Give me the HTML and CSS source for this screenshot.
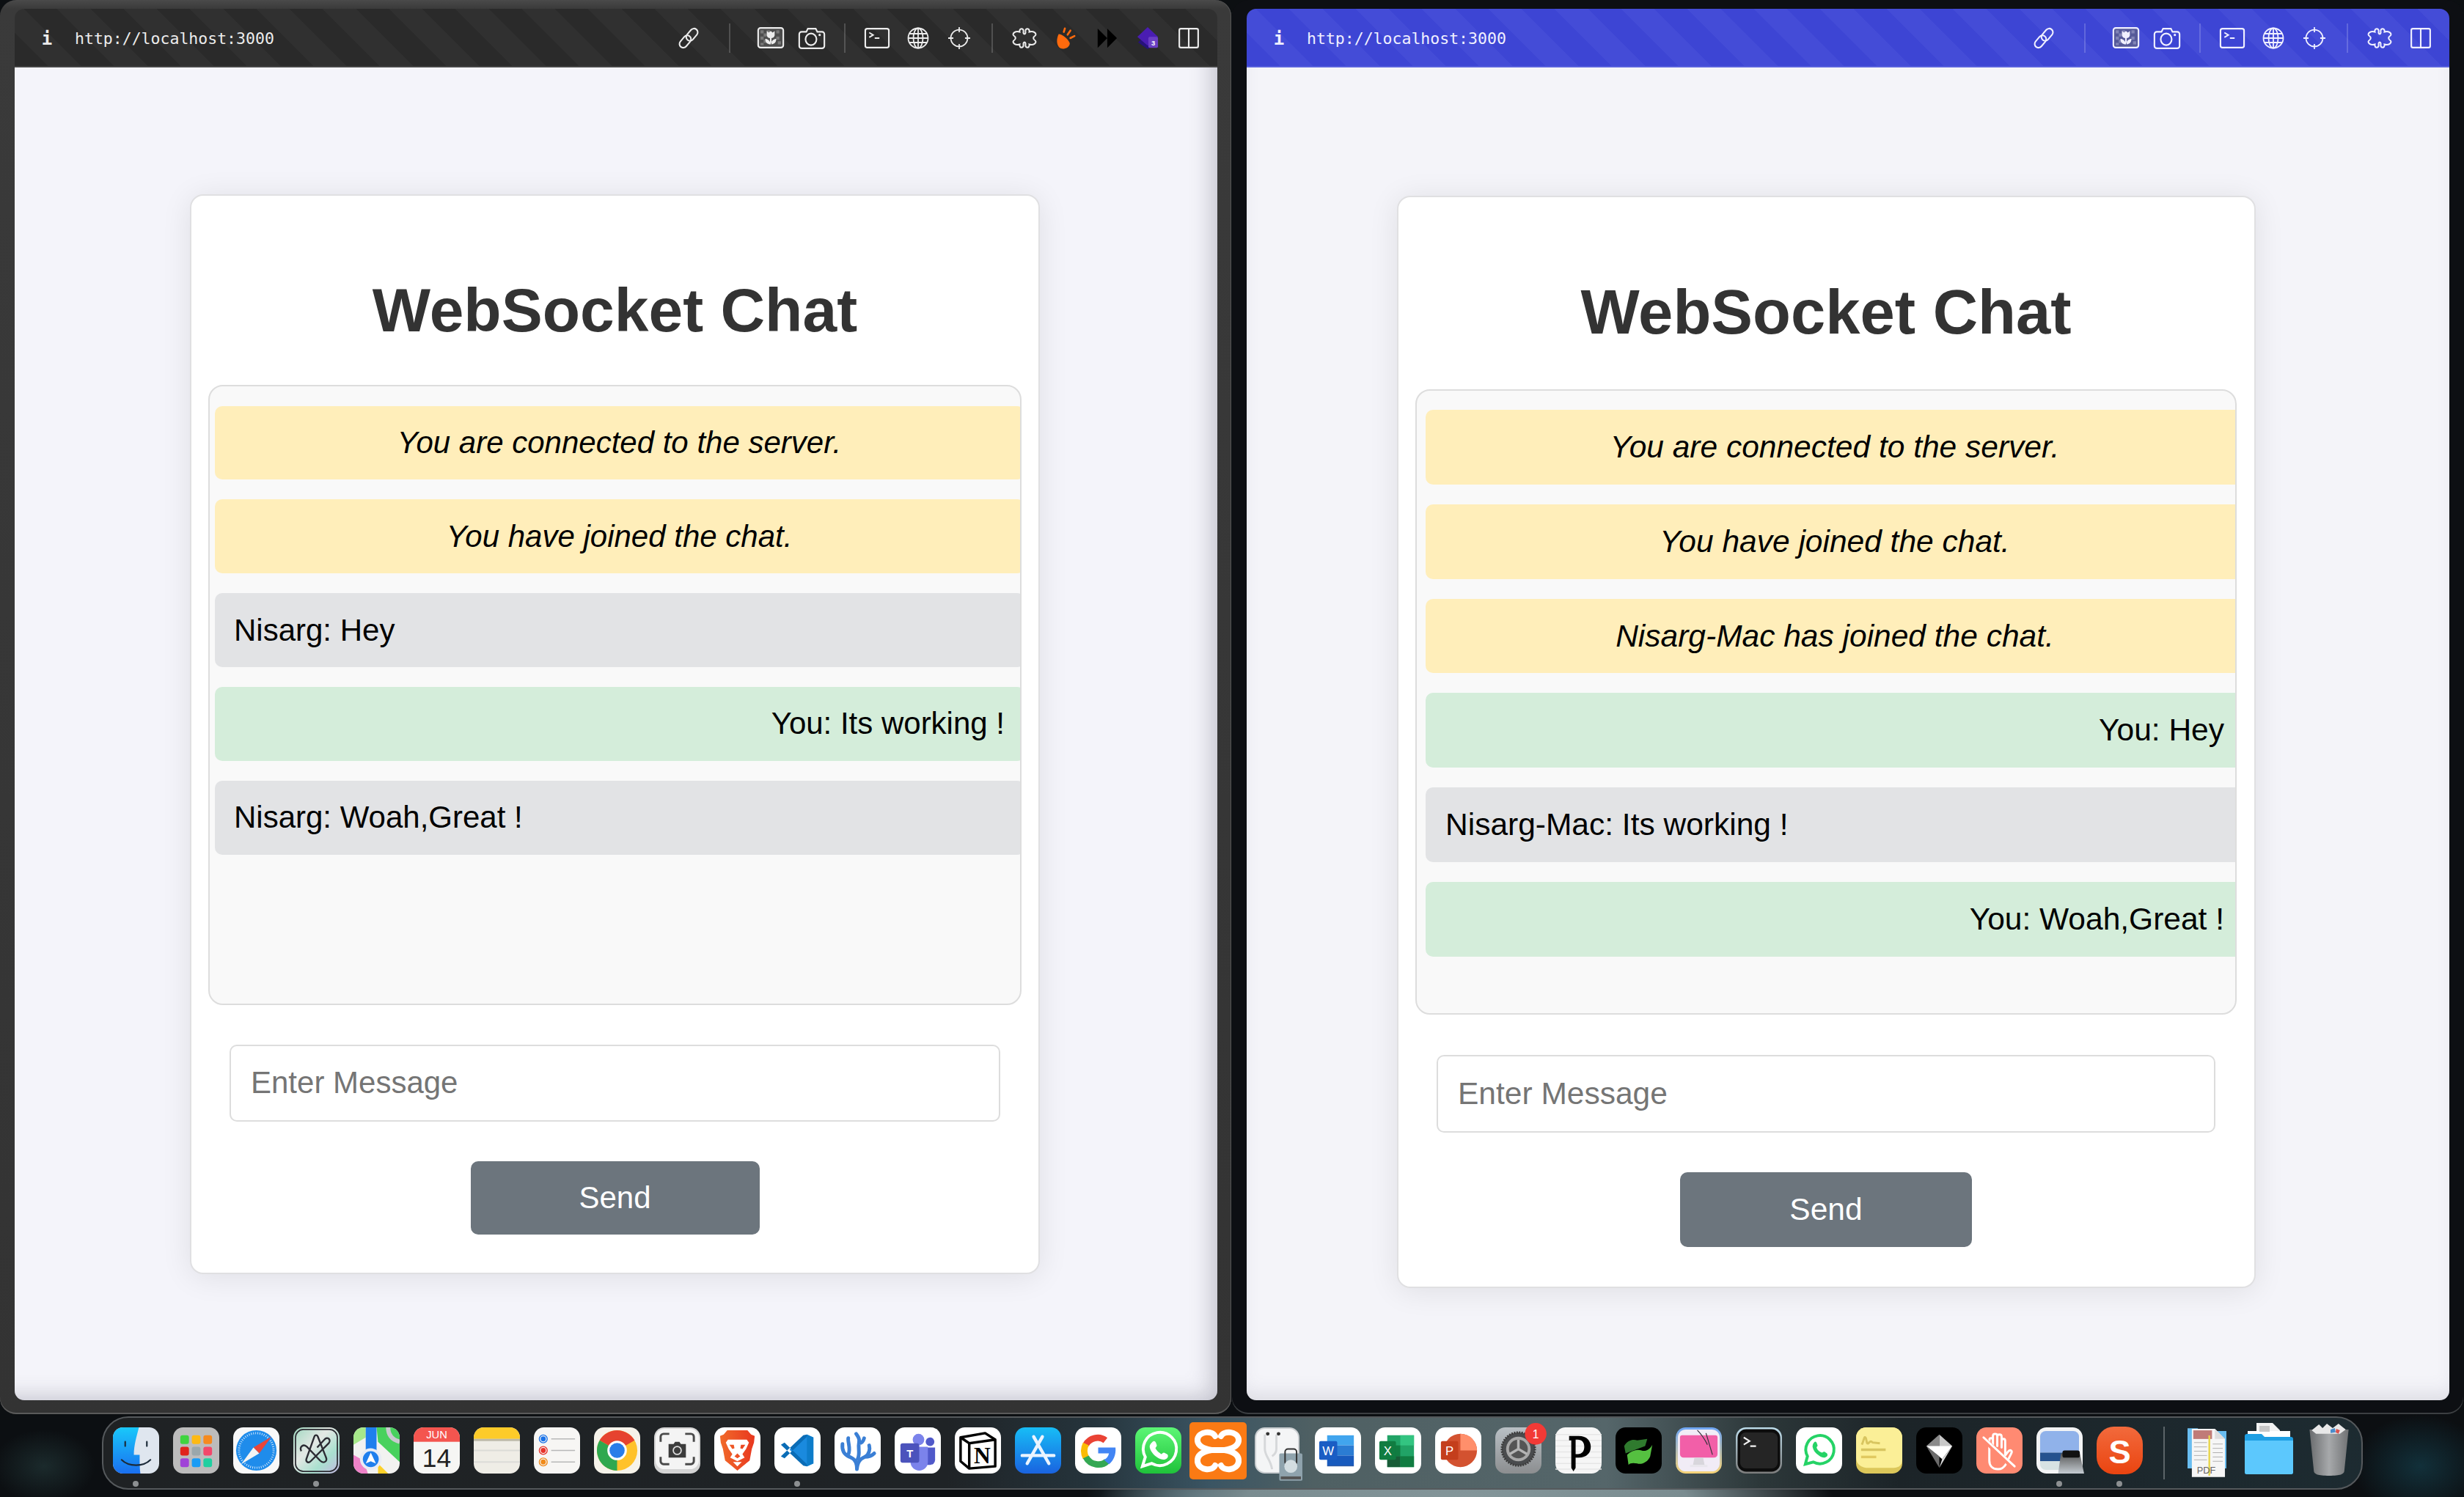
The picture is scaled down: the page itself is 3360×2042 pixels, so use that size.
FILE: index.html
```html
<!DOCTYPE html>
<html lang="en">
<head>
<meta charset="utf-8">
<title>WebSocket Chat</title>
<link rel="stylesheet" href="styles.css">
</head>
<body>
<svg class="sprite" aria-hidden="true">
  <symbol id="i-link" viewBox="0 0 32 32"><g fill="none" stroke="currentColor" stroke-width="2.200" transform="rotate(-50 16 16)"><rect x="-1" y="10" width="20" height="11" rx="5.500"/><rect x="13" y="11" width="20" height="11" rx="5.500"/></g></symbol>
  <symbol id="i-tulip" viewBox="0 0 34 28"><rect x="1" y="1" width="32" height="25" rx="3" fill="#666" fill-opacity=".55" stroke="currentColor" stroke-width="2"/><g fill="currentColor" fill-opacity=".28"><rect x="4" y="4" width="4" height="4"/><rect x="12" y="4" width="4" height="4"/><rect x="24" y="4" width="4" height="4"/><rect x="8" y="8" width="4" height="4"/><rect x="24" y="12" width="4" height="4"/><rect x="4" y="12" width="4" height="4"/><rect x="8" y="16" width="4" height="4"/><rect x="26" y="18" width="4" height="4"/><rect x="4" y="20" width="4" height="3"/></g><path fill="currentColor" d="M12 5l2.500 2L17 5l2.500 2L22 5v5c0 2.500-2.200 4-5 4s-5-1.500-5-4zM16 14h2v8h-2zM10 15c3 0 6 2 7 7-4 0-7-2-7-7zM24 15c-3 0-6 2-7 7 4 0 7-2 7-7z"/></symbol>
  <symbol id="i-camera" viewBox="0 0 34 28"><path fill="none" stroke="currentColor" stroke-width="2" d="M4 6h6l2-4h10l2 4h6a3 3 0 0 1 3 3v15a3 3 0 0 1-3 3H4a3 3 0 0 1-3-3V9a3 3 0 0 1 3-3z"/><ellipse cx="16" cy="15.500" rx="7" ry="7.500" fill="none" stroke="currentColor" stroke-width="2"/><circle cx="27" cy="10" r="1.500" fill="currentColor"/></symbol>
  <symbol id="i-term" viewBox="0 0 34 28"><rect x="2" y="2" width="30" height="24" rx="2.500" fill="none" stroke="currentColor" stroke-width="2"/><path fill="none" stroke="currentColor" stroke-width="1.800" d="M7 7l5 3-5 3M14 14h6"/></symbol>
  <symbol id="i-globe" viewBox="0 0 30 30"><g fill="none" stroke="currentColor" stroke-width="1.800"><circle cx="15" cy="15" r="13.500"/><ellipse cx="15" cy="15" rx="6.500" ry="13.500"/><path d="M15 1.500v27M3 9h24M1.500 15h27M3 21h24"/></g></symbol>
  <symbol id="i-target" viewBox="0 0 34 34"><g fill="none" stroke="currentColor" stroke-width="2"><circle cx="17" cy="17" r="13"/><path d="M17 0v8M17 26v8M0 17h8M26 17h8"/></g></symbol>
  <symbol id="i-puzzle" viewBox="0 0 40 32"><path fill="none" stroke="currentColor" stroke-width="2.200" d="M13 7C12 1 19 1 18.500 6Q18 10 20 10T21.500 6C21 1 28 1 27 7 33 5 38 9 36 12Q33 14 33 16T36 20C38 23 33 27 27 25 28 31 21 31 21.500 26Q22 22 20 22T18.500 26C19 31 12 31 13 25 7 27 2 23 4 20Q7 18 7 16T4 12C2 9 7 5 13 7Z"/></symbol>
  <symbol id="i-side" viewBox="0 0 28 28"><path fill="none" stroke="currentColor" stroke-width="2" d="M4 2h20a2 2 0 0 1 2 2v20a2 2 0 0 1-2 2H4a2 2 0 0 1-2-2V4a2 2 0 0 1 2-2zM14 2v24"/></symbol>
</svg>

<main class="desktop">
  <section class="window window-dark">
    <div class="browser">
      <header class="toolbar toolbar-dark">
        <span class="site-info">i</span>
        <span class="url">http://localhost:3000</span>
        <span class="tool"><svg class="ti"><use href="#i-link"/></svg></span>
        <span class="tool-sep tool-sep-wide"></span>
        <span class="tool"><svg class="ti ti-w"><use href="#i-tulip"/></svg></span>
        <span class="tool"><svg class="ti ti-w"><use href="#i-camera"/></svg></span>
        <span class="tool-sep"></span>
        <span class="tool"><svg class="ti ti-w"><use href="#i-term"/></svg></span>
        <span class="tool"><svg class="ti"><use href="#i-globe"/></svg></span>
        <span class="tool"><svg class="ti ti-w"><use href="#i-target"/></svg></span>
        <span class="tool-sep"></span>
        <span class="tool"><svg class="ti ti-w"><use href="#i-puzzle"/></svg></span>
        <span class="tool"><svg class="ti" viewBox="0 0 32 32"><path fill="#ff6a0d" d="M6 10C11 10 19 16 22 23 23 29 14 33 9 31 3 28 2 18 6 10Z"/><path fill="none" stroke="#ff6a0d" stroke-width="2.800" stroke-linecap="round" d="M15 2l-1.500 5M23 5l-4 6M29 13l-6 3"/></svg></span>
        <span class="tool"><svg class="ti" viewBox="0 0 32 32"><path fill="#000" d="M3 2l14 14L3 30zM17 2l14 14-14 14z"/></svg></span>
        <span class="tool"><svg class="ti" viewBox="0 0 32 32"><path fill="#26127a" d="M16 9L30 22 16 32 2 22z"/><path fill="#4a1db2" d="M16 0l15 14-15 13L1 14z"/><rect x="17" y="14" width="14" height="16" rx="2" fill="#6b3fc4"/><text class="badge-3" x="24" y="27">3</text></svg></span>
        <span class="tool"><svg class="ti"><use href="#i-side"/></svg></span>
      </header>
      <div class="page page-a">
        <article class="card card-a">
          <h1 class="title">WebSocket Chat</h1>
          <div class="chat">
            <p class="msg msg-sys">You are connected to the server.</p>
            <p class="msg msg-sys">You have joined the chat.</p>
            <p class="msg msg-other">Nisarg: Hey</p>
            <p class="msg msg-me">You: Its working !</p>
            <p class="msg msg-other">Nisarg: Woah,Great !</p>
          </div>
          <input class="field" type="text" placeholder="Enter Message">
          <button class="send" type="button">Send</button>
        </article>
      </div>
    </div>
  </section>

  <section class="window window-blue">
    <div class="browser">
      <header class="toolbar toolbar-blue">
        <span class="site-info">i</span>
        <span class="url">http://localhost:3000</span>
        <span class="tool"><svg class="ti"><use href="#i-link"/></svg></span>
        <span class="tool-sep tool-sep-wide"></span>
        <span class="tool"><svg class="ti ti-w"><use href="#i-tulip"/></svg></span>
        <span class="tool"><svg class="ti ti-w"><use href="#i-camera"/></svg></span>
        <span class="tool-sep"></span>
        <span class="tool"><svg class="ti ti-w"><use href="#i-term"/></svg></span>
        <span class="tool"><svg class="ti"><use href="#i-globe"/></svg></span>
        <span class="tool"><svg class="ti ti-w"><use href="#i-target"/></svg></span>
        <span class="tool-sep"></span>
        <span class="tool"><svg class="ti ti-w"><use href="#i-puzzle"/></svg></span>
        <span class="tool"><svg class="ti"><use href="#i-side"/></svg></span>
      </header>
      <div class="page page-b">
        <article class="card card-b">
          <h1 class="title">WebSocket Chat</h1>
          <div class="chat">
            <p class="msg msg-sys">You are connected to the server.</p>
            <p class="msg msg-sys">You have joined the chat.</p>
            <p class="msg msg-sys">Nisarg-Mac has joined the chat.</p>
            <p class="msg msg-me">You: Hey</p>
            <p class="msg msg-other">Nisarg-Mac: Its working !</p>
            <p class="msg msg-me">You: Woah,Great !</p>
          </div>
          <input class="field" type="text" placeholder="Enter Message">
          <button class="send" type="button">Send</button>
        </article>
      </div>
    </div>
  </section>
</main>

<nav class="dock">
  <!-- Finder -->
  <div class="dock-item running"><svg class="app" viewBox="0 0 64 64"><defs><linearGradient id="gf" x1="0" y1="0" x2="0" y2="1"><stop offset="0" stop-color="#19c8fa"/><stop offset="1" stop-color="#1a6ff0"/></linearGradient></defs><rect width="64" height="64" rx="14" fill="#dfe6ef"/><path fill="url(#gf)" d="M14 0h22c-3 12-7 24-7 38h8c0 9 0 18 1 26H14A14 14 0 0 1 0 50V14A14 14 0 0 1 14 0z"/><path fill="none" stroke="#1c2b3a" stroke-width="2.200" stroke-linecap="round" d="M12 45c10 10 30 10 40 0M17 20v6M47 20v6"/></svg></div>
  <!-- Launchpad -->
  <div class="dock-item"><svg class="app" viewBox="0 0 64 64"><rect width="64" height="64" rx="14" fill="#bcbcbc"/><rect x="10" y="11" width="12" height="12" rx="3" fill="#3fd43f"/><rect x="26" y="11" width="12" height="12" rx="3" fill="#fdb913"/><rect x="42" y="11" width="12" height="12" rx="3" fill="#f58a1f"/><rect x="10" y="27" width="12" height="12" rx="3" fill="#e0241c"/><rect x="26" y="27" width="12" height="12" rx="3" fill="#9aa7ab"/><rect x="42" y="27" width="12" height="12" rx="3" fill="#f2476a"/><rect x="10" y="43" width="12" height="12" rx="3" fill="#a043d8"/><rect x="26" y="43" width="12" height="12" rx="3" fill="#1a9cf5"/><rect x="42" y="43" width="12" height="12" rx="3" fill="#1fcfa0"/></svg></div>
  <!-- Safari -->
  <div class="dock-item"><svg class="app" viewBox="0 0 64 64"><rect width="64" height="64" rx="14" fill="#f8f8f8"/><circle cx="32" cy="32" r="28" fill="#1f8ceb"/><circle cx="32" cy="32" r="24" fill="none" stroke="#cfe6fb" stroke-width="3" stroke-dasharray="1 2"/><path fill="#e9453a" d="M53 13L28 28l8 8z"/><path fill="#f4f4f4" d="M11 51l25-15-8-8z"/></svg></div>
  <!-- A -->
  <div class="dock-item running"><svg class="app" viewBox="0 0 64 64"><defs><linearGradient id="ga" x1="0" y1="0" x2="1" y2="1"><stop offset="0" stop-color="#9fd8c0"/><stop offset=".4" stop-color="#e4e8e4"/><stop offset=".7" stop-color="#a9e0cf"/><stop offset="1" stop-color="#c6b6e2"/></linearGradient></defs><rect width="64" height="64" rx="14" fill="url(#ga)"/><rect x="3" y="3" width="58" height="58" rx="11" fill="none" stroke="#2c2c33" stroke-width="1.800"/><path fill="none" stroke="#2c2c33" stroke-width="2.400" d="M11 33c-3-6 3-11 8-6l18 19c5 5 11 1 8-5L34 13c-1-3-4-3-5 0L18 44c-1 4 3 6 6 3l25-25c4-5-2-10-6-5L33 28"/></svg></div>
  <!-- Maps -->
  <div class="dock-item"><svg class="app" viewBox="0 0 64 64"><defs><clipPath id="cm"><rect width="64" height="64" rx="14"/></clipPath></defs><g clip-path="url(#cm)"><rect width="64" height="64" fill="#f2f2f0"/><path fill="#48d15d" d="M32 0h32v48L34 20z"/><path fill="#a6e88a" d="M0 0h17v14L0 24z"/><path fill="#ee82c8" d="M0 38l14 8 6 18H0z"/><path fill="#fcd12a" d="M34 50l14 14H34z"/><rect x="17" y="0" width="15" height="40" fill="#1f7fed"/><path fill="none" stroke="#c9c9cf" stroke-width="6" d="M48 0c0 10 5 17 16 20"/><circle cx="24" cy="44" r="15" fill="#e8ecf4"/><circle cx="24" cy="44" r="11" fill="#1f7fed"/><path fill="#fff" d="M24 35l7 15-7-3-7 3z"/></g></svg></div>
  <!-- Calendar -->
  <div class="dock-item"><svg class="app" viewBox="0 0 64 64"><defs><clipPath id="cc"><rect width="64" height="64" rx="14"/></clipPath></defs><g clip-path="url(#cc)"><rect width="64" height="64" fill="#f6f6f4"/><rect width="64" height="20" fill="#f4554f"/></g><text class="cal-m" x="32" y="15">JUN</text><text class="cal-d" x="32" y="55">14</text></svg></div>
  <!-- Notes -->
  <div class="dock-item"><svg class="app" viewBox="0 0 64 64"><defs><clipPath id="cn"><rect width="64" height="64" rx="14"/></clipPath></defs><g clip-path="url(#cn)"><rect width="64" height="64" fill="#efedE6"/><rect width="64" height="16" fill="#fdcb29"/><rect y="16" width="64" height="3" fill="#bdb9a8"/><path stroke="#dcdbd7" stroke-width="2" d="M0 32h64M0 48h64"/></g></svg></div>
  <!-- Reminders -->
  <div class="dock-item"><svg class="app" viewBox="0 0 64 64"><rect width="64" height="64" rx="14" fill="#f7f6f4"/><g fill="none" stroke-width="1.400"><circle cx="13" cy="16" r="5.500" stroke="#1a73e8"/><circle cx="13" cy="32" r="5.500" stroke="#e8332a"/><circle cx="13" cy="48" r="5.500" stroke="#f08a1a"/></g><circle cx="13" cy="16" r="3.500" fill="#1a73e8"/><circle cx="13" cy="32" r="3.500" fill="#e8332a"/><circle cx="13" cy="48" r="3.500" fill="#f08a1a"/><path stroke="#b8b8b8" stroke-width="1.500" d="M24 16h33M24 32h33M24 48h33"/></svg></div>
  <!-- Chrome -->
  <div class="dock-item"><svg class="app" viewBox="0 0 64 64"><rect width="64" height="64" rx="14" fill="#f6f3ea"/><circle cx="32" cy="32" r="28" fill="#ffc22a"/><path fill="#e6432f" d="M32 32L56.200 18A28 28 0 0 0 7.800 18z"/><path fill="#2fa84f" d="M32 32L7.800 18A28 28 0 0 0 32 60z"/><circle cx="32" cy="32" r="13.500" fill="#fff"/><circle cx="32" cy="32" r="10.500" fill="#2a7de9"/></svg></div>
  <!-- Screenshot -->
  <div class="dock-item"><svg class="app" viewBox="0 0 64 64"><rect width="64" height="64" rx="14" fill="#d4d4d4"/><rect x="2" y="2" width="60" height="56" rx="12" fill="#f4f4f4"/><path fill="none" stroke="#4a4a4a" stroke-width="3" d="M9 20V13a4 4 0 0 1 4-4h8M43 9h8a4 4 0 0 1 4 4v7M55 41v6a4 4 0 0 1-4 4h-8M21 51h-8a4 4 0 0 1-4-4v-6"/><path fill="#3c3c3c" d="M20 23h7l2-3h6l2 3h7v19H20z"/><circle cx="32" cy="32" r="5.500" fill="none" stroke="#ddd" stroke-width="1.800"/></svg></div>
  <!-- Brave -->
  <div class="dock-item"><svg class="app" viewBox="0 0 64 64"><defs><linearGradient id="gb" x1="0" y1="0" x2="1" y2="0"><stop offset="0" stop-color="#f16a2a"/><stop offset="1" stop-color="#e8371f"/></linearGradient></defs><rect width="64" height="64" rx="14" fill="#fff"/><path fill="url(#gb)" d="M18 4h28l5 6 5 2-1 9-3 9-3 16-10 8-7 6-7-6-10-8-3-16-3-9-1-9 5-2z"/><path fill="#fff" fill-rule="evenodd" d="M19 17h26l3 4-4 9-5 7 3 5-10 5-10-5 3-5-5-7-4-9zM27 24h-6l4 6 3-1zM37 24h6l-4 6-3-1zM32 36l-4 4 4 3 4-3z"/><path fill="#fff" d="M26 48h12l-6 6z"/></svg></div>
  <!-- VS Code -->
  <div class="dock-item running"><svg class="app" viewBox="0 0 64 64"><rect width="64" height="64" rx="14" fill="#fff"/><path fill="#1a8ade" d="M45 10l9 4v36l-9 4-24-23z"/><path fill="#0a6cb6" d="M9 24l5-3 31 30v3l-5-1zM9 40l5 3 31-30v-3l-5 1z"/><path fill="#0d7cc9" d="M45 10v44l9-4V14z"/></svg></div>
  <!-- Coral -->
  <div class="dock-item"><svg class="app" viewBox="0 0 64 64"><rect width="64" height="64" rx="14" fill="#fff"/><path fill="none" stroke="#3a7fd5" stroke-width="5" stroke-linecap="round" d="M31 58c0-10-3-14-10-17-8-3-11-9-10-18M31 58c1-10 4-14 11-17 7-4 7-12 6-16M42 41c8 0 11-3 13-5M19 38c4-8-1-18 0-23M32 44c4-8 0-14 2-24 1-5-2-8-4-11M34 22c4 0 6-3 7-7"/></svg></div>
  <!-- Teams -->
  <div class="dock-item"><svg class="app" viewBox="0 0 64 64"><rect width="64" height="64" rx="14" fill="#fff"/><circle cx="33" cy="17" r="8" fill="#7b83eb"/><circle cx="49" cy="20" r="6" fill="#5059c9"/><path fill="#5059c9" d="M42 28h14v17a7 7 0 0 1-7 7h-7z"/><path fill="#7b83eb" d="M22 27h24v21a12 12 0 0 1-24 0z"/><rect x="8" y="22" width="26" height="27" rx="3" fill="#4b53bc"/><text class="t-teams" x="21" y="42">T</text></svg></div>
  <!-- Notion -->
  <div class="dock-item"><svg class="app" viewBox="0 0 64 64"><rect width="64" height="64" rx="14" fill="#fff"/><path fill="#fff" stroke="#000" stroke-width="3.500" stroke-linejoin="round" d="M8 14L42 8l14 9v37l-36 3-12-10z"/><path fill="none" stroke="#000" stroke-width="3.500" d="M8 14l12 8 36-5M20 22v35"/><text class="t-notion" x="38" y="50">N</text></svg></div>
  <!-- App Store -->
  <div class="dock-item"><svg class="app" viewBox="0 0 64 64"><defs><linearGradient id="gs" x1="0" y1="0" x2="0" y2="1"><stop offset="0" stop-color="#17bdf6"/><stop offset="1" stop-color="#1a63e0"/></linearGradient></defs><rect width="64" height="64" rx="14" fill="url(#gs)"/><path fill="none" stroke="#eaf4ff" stroke-width="4.500" stroke-linecap="round" d="M26 13l21 37M38 13L17 50M10 39h44"/></svg></div>
  <!-- Google -->
  <div class="dock-item"><svg class="app" viewBox="0 0 64 64"><rect width="64" height="64" rx="14" fill="#fff"/><path fill="none" stroke="#ea4335" stroke-width="9" d="M15 24c5-9 18-13 27-6"/><path fill="none" stroke="#fbbc05" stroke-width="9" d="M15 23c-3 6-3 13 0 19"/><path fill="none" stroke="#34a853" stroke-width="9" d="M15 41c6 12 22 13 29 6"/><path fill="#4285f4" d="M32 28h24c1 10-3 19-9 23l-7-6c4-2 6-5 7-9H32z"/></svg></div>
  <!-- WhatsApp -->
  <div class="dock-item"><svg class="app" viewBox="0 0 64 64"><defs><linearGradient id="gw" x1="0" y1="0" x2="0" y2="1"><stop offset="0" stop-color="#5cf675"/><stop offset="1" stop-color="#1fc23a"/></linearGradient></defs><rect width="64" height="64" rx="14" fill="url(#gw)"/><path fill="none" stroke="#fff" stroke-width="4" d="M10 54l4-13A23 23 0 1 1 23 50z"/><path fill="#fff" d="M24 20c2-2 4-1 5 2l1 3c0 2-2 3-2 4 2 4 5 6 8 8 1 0 2-2 4-2l4 2c2 1 2 4 0 6-3 3-8 2-13-1-6-4-10-9-11-15 0-3 2-5 4-7z"/></svg></div>
  <!-- XAMPP -->
  <div class="dock-item dock-item-big"><svg class="app-big" viewBox="0 0 78 78"><rect width="78" height="78" rx="5" fill="#fb7a14"/><path fill="none" stroke="#fff" stroke-width="8" stroke-linecap="round" d="M35 19C31 11 13 12 11 23 10 32 19 36 30 38 18 40 10 45 11 54 13 66 31 67 35 59M43 19C47 11 65 12 67 23 68 32 59 36 48 38 60 40 68 45 67 54 65 66 47 67 43 59M30 38H48"/></svg></div>
  <!-- Disk Utility -->
  <div class="dock-item"><svg class="app" viewBox="0 0 64 64"><rect x="1" y="1" width="60" height="62" rx="13" fill="#f4f5f6" stroke="#c9cdd0" stroke-width="2"/><path fill="none" stroke="#d6d8da" stroke-width="3" d="M14 10v20c0 10 8 14 10 28M30 10v20c0 5-3 8-6 10"/><circle cx="18" cy="9" r="2.500" fill="#333"/><circle cx="33" cy="9" r="2.500" fill="#333"/><rect x="34" y="36" width="32" height="38" rx="2" fill="#8fa3ad"/><rect x="42" y="30" width="16" height="22" rx="4" fill="none" stroke="#333" stroke-width="2"/><circle cx="50" cy="54" r="9" fill="#d3dde1"/><rect x="36" y="68" width="28" height="4" fill="#555"/></svg></div>
  <!-- Word -->
  <div class="dock-item"><svg class="app" viewBox="0 0 64 64"><rect width="64" height="64" rx="14" fill="#fff"/><rect x="17" y="11" width="37" height="14" fill="#41a5ee"/><rect x="17" y="25" width="37" height="14" fill="#2b7cd3"/><rect x="17" y="39" width="37" height="14" fill="#185abd"/><rect x="17" y="53" width="37" height="1" fill="#103f91"/><rect x="6" y="19" width="25" height="26" rx="2" fill="#1a5dc4"/><text class="t-doc" x="18.500" y="39">W</text></svg></div>
  <!-- Excel -->
  <div class="dock-item"><svg class="app" viewBox="0 0 64 64"><rect width="64" height="64" rx="14" fill="#fff"/><path fill="#21a366" d="M17 11h37v44H17z"/><rect x="35" y="11" width="19" height="14" fill="#33c481"/><rect x="17" y="25" width="18" height="15" fill="#107c41"/><rect x="35" y="40" width="19" height="15" fill="#107c41"/><rect x="17" y="40" width="18" height="15" fill="#185c37"/><rect x="6" y="19" width="23" height="26" rx="2" fill="#107c41"/><text class="t-doc" x="17.500" y="39">X</text></svg></div>
  <!-- PowerPoint -->
  <div class="dock-item"><svg class="app" viewBox="0 0 64 64"><rect width="64" height="64" rx="14" fill="#fff"/><circle cx="35" cy="32" r="23" fill="#d35230"/><path fill="#ff8f6b" d="M35 9a23 23 0 0 1 23 23H35z"/><rect x="8" y="19" width="24" height="26" rx="2" fill="#c43e1c"/><text class="t-doc" x="20" y="39">P</text></svg></div>
  <!-- Settings -->
  <div class="dock-item"><svg class="app" viewBox="0 0 64 64"><defs><linearGradient id="gt" x1="0" y1="0" x2="0" y2="1"><stop offset="0" stop-color="#b9c0c5"/><stop offset="1" stop-color="#8c8e90"/></linearGradient></defs><rect width="64" height="64" rx="14" fill="url(#gt)"/><circle cx="32" cy="30" r="23" fill="#4a4c4e" stroke="#3a3a3a" stroke-width="3" stroke-dasharray="2 1.500"/><circle cx="32" cy="30" r="17" fill="#a8a8a8"/><circle cx="32" cy="30" r="13" fill="#555"/><path fill="none" stroke="#b5b5b5" stroke-width="3.500" d="M32 30V17M32 30l12 7M32 30l-12 7"/><circle cx="56" cy="9" r="15" fill="#f23a36"/><text class="t-badge" x="56" y="15">1</text></svg></div>
  <!-- P -->
  <div class="dock-item"><svg class="app" viewBox="0 0 64 64"><rect width="64" height="64" rx="14" fill="#f6f6f6"/><path stroke="#e6e6e6" stroke-width="1.500" d="M0 10h64M0 18h64M0 26h64M0 34h64M0 42h64M0 50h64M0 58h64"/><path fill="#000" fill-rule="evenodd" d="M19 12h13c12 0 17 7 17 15s-5 15-17 15h-4v14l-3 5-3-5V18h-3zM28 17v20h3c6 0 9-4 9-10s-3-10-9-10z"/></svg></div>
  <!-- green -->
  <div class="dock-item"><svg class="app" viewBox="0 0 64 64"><rect width="64" height="64" rx="14" fill="#000"/><path fill="#2f7a2e" d="M12 26c4-8 12-10 18-8l14-2-3 10-27 10z"/><path fill="#55c040" d="M16 38c6-6 14-8 20-6s12-2 15-8l-3 16c-3 8-12 12-18 10-5-1-10-1-12 2z"/></svg></div>
  <!-- CleanMyMac -->
  <div class="dock-item"><svg class="app" viewBox="0 0 64 64"><defs><linearGradient id="gcm" x1="0" y1="0" x2="0" y2="1"><stop offset="0" stop-color="#6ea6f5"/><stop offset="1" stop-color="#f8d477"/></linearGradient></defs><rect width="64" height="64" rx="14" fill="url(#gcm)"/><rect x="3" y="3" width="58" height="58" rx="11" fill="#f1ecf6"/><path fill="#f25fa8" d="M6 14a3 3 0 0 1 3-3h46a3 3 0 0 1 3 3v23a5 5 0 0 1-5 5H11a5 5 0 0 1-5-5z"/><path fill="#d8d6dc" d="M26 42h12l2 10H24z"/><path fill="#e8e6ec" d="M20 52h24v3H20z"/><path fill="none" stroke="#34343c" stroke-width="1.200" d="M30 4c6 6 10 12 14 20M42 8l9 30"/></svg></div>
  <!-- Terminal -->
  <div class="dock-item"><svg class="app" viewBox="0 0 64 64"><defs><linearGradient id="gtm" x1="0" y1="0" x2="0" y2="1"><stop offset="0" stop-color="#bcdcea"/><stop offset="1" stop-color="#7d7d7d"/></linearGradient></defs><rect width="64" height="64" rx="14" fill="url(#gtm)"/><rect x="2.500" y="2.500" width="59" height="59" rx="12" fill="#0c0c0c"/><rect x="6" y="7" width="52" height="50" rx="8" fill="#252525"/><path fill="none" stroke="#f3f3f3" stroke-width="2.200" d="M11 14l8 5-8 5M20 26h8"/></svg></div>
  <!-- WhatsApp white -->
  <div class="dock-item"><svg class="app" viewBox="0 0 64 64"><rect width="64" height="64" rx="14" fill="#fff"/><path fill="none" stroke="#25d366" stroke-width="4" d="M13 51l3-11A19.500 19.500 0 1 1 24 48z"/><path fill="#25d366" d="M25 21c2-2 3-1 4 1l1 3c0 2-2 2-1 4 1 3 4 5 7 6 1 0 2-2 4-1l3 2c1 1 1 3 0 4-3 3-7 2-11-1-5-3-8-7-9-12 0-3 1-5 2-6z"/></svg></div>
  <!-- Stickies -->
  <div class="dock-item"><svg class="app" viewBox="0 0 64 64"><rect width="64" height="64" rx="14" fill="#dcc75a"/><path fill="#fbef97" d="M14 0h36a14 14 0 0 1 14 14v30c0 8-4 12-12 12H14A14 14 0 0 1 0 42V14A14 14 0 0 1 14 0z"/><path fill="none" stroke="#d8c560" stroke-width="3" d="M8 24c3-6 3-12 5-10 2 2 1 10 4 8 3-3 4-3 6-1l10 1"/><path stroke="#d8c560" stroke-width="3.500" d="M7 31h34"/><path stroke="#e1c960" stroke-width="3.500" d="M7 41h21"/></svg></div>
  <!-- crystal -->
  <div class="dock-item"><svg class="app" viewBox="0 0 64 64"><rect width="64" height="64" rx="14" fill="#000"/><path fill="#8a8a8a" d="M32 10L14 26l18 4z"/><path fill="#c8c8c8" d="M32 10l18 16-18 4z"/><path fill="#fff" d="M14 26h36L36 44z"/><path fill="#6c6c6c" d="M14 26l18 30V40z"/><path fill="#dcdcdc" d="M32 56l18-30-14 18z"/></svg></div>
  <!-- hand -->
  <div class="dock-item"><svg class="app" viewBox="0 0 64 64"><rect width="64" height="64" rx="14" fill="#ff8a72"/><path fill="none" stroke="#fff" stroke-width="3" stroke-linecap="round" stroke-linejoin="round" d="M18 34V18c0-4 5-4 5 0v9-15c0-4 6-4 6 0v14-13c0-4 6-4 6 0v15-9c0-4 5-4 5 0v20c4-5 5-8 8-7 2 1 1 3 0 5l-7 14c-3 5-6 7-11 7-9 0-12-6-12-12z"/><path stroke="#ff8a72" stroke-width="7" d="M10 16l40 38"/><path stroke="#fff" stroke-width="3" stroke-linecap="round" d="M10 14l43 40"/></svg></div>
  <!-- Preview -->
  <div class="dock-item running"><svg class="app" viewBox="0 0 64 64"><defs><clipPath id="cp"><rect x="5" y="5" width="54" height="54" rx="8"/></clipPath><linearGradient id="gp" x1="0" y1="0" x2="0" y2="1"><stop offset="0" stop-color="#555"/><stop offset="1" stop-color="#c5ccd2"/></linearGradient></defs><rect width="64" height="64" rx="14" fill="#f3f4f5"/><g clip-path="url(#cp)"><rect x="5" y="5" width="54" height="30" fill="#90b2ea"/><rect x="5" y="35" width="54" height="12" fill="#25528f"/><rect x="5" y="47" width="54" height="12" fill="#d7e2e3"/></g><path fill="url(#gp)" d="M34 36h26l6 28H30z"/><rect x="36" y="32" width="24" height="10" rx="3" fill="#111"/></svg></div>
  <!-- S -->
  <div class="dock-item running"><svg class="app" viewBox="0 0 64 64"><defs><linearGradient id="gz" x1="0" y1="0" x2="0" y2="1"><stop offset="0" stop-color="#f26a3c"/><stop offset="1" stop-color="#ea4410"/></linearGradient></defs><rect y="-1" width="64" height="66" rx="24" fill="url(#gz)"/><text class="t-s" x="32" y="50">S</text></svg></div>
  <span class="dock-sep"></span>
  <!-- PDF stack -->
  <div class="dock-stack"><svg class="app" viewBox="0 0 54 68"><path fill="#69bdf0" d="M0 0h14l4 4h36v52H0z"/><path fill="#f6f6f6" d="M6 1h32l14 14v53H6z"/><rect x="8" y="3" width="26" height="12" fill="#c07b78"/><rect x="29" y="10" width="2.500" height="56" fill="#e8d64d"/><path stroke="#b0b0b0" stroke-width="1" d="M9 20h18M9 26h18M9 32h18M9 38h18M9 44h18M35 22h14M35 28h14M35 34h14M35 40h14M35 46h14"/><path fill="#ddd" d="M38 1l14 14H38z"/><text class="t-pdf" x="26" y="63">PDF</text></svg></div>
  <!-- folder -->
  <div class="dock-stack dock-stack-f"><svg class="app" viewBox="0 0 66 70"><path fill="#f2f2f2" d="M16 0h22l10 10v16H16z"/><rect x="4" y="11" width="58" height="18" fill="#fff"/><rect x="20" y="4" width="14" height="8" fill="#c8c8c8"/><path fill="#1f9fe3" d="M0 18q0-3 3-3h20l4 4h36q3 0 3 3v45q0 3-3 3H3q-3 0-3-3z"/><path fill="#5cc8fd" d="M0 24h66v43q0 3-3 3H3q-3 0-3-3z"/></svg></div>
  <!-- trash -->
  <div class="dock-stack dock-stack-t"><svg class="app" viewBox="0 0 56 72"><defs><linearGradient id="gtr" x1="0" y1="0" x2="1" y2="0"><stop offset="0" stop-color="#6a6c6e"/><stop offset=".5" stop-color="#a7a9ab"/><stop offset="1" stop-color="#707274"/></linearGradient></defs><path fill="url(#gtr)" d="M1 8h54l-6 58c-1 4-5 6-21 6S8 70 7 66z"/><path fill="#e8e8e8" d="M4 9l10-8 5 5 6-6 8 6 8-6 10 8-8 6H10z"/><path fill="#4a8ccb" d="M30 8l6-2 1 6-7 1z"/><path fill="#d9534f" d="M38 7l5 2-2 5-4-2z"/></svg></div>
</nav>
</body>
</html>
```

FILE: styles.css
```css
* { box-sizing: border-box; }

html, body { margin: 0; padding: 0; }

body {
  width: 3360px;
  height: 2042px;
  overflow: hidden;
  font-family: "Liberation Sans", Arial, sans-serif;
  background-color: #0c0f12;
  background-image:
    radial-gradient(ellipse 500px 70px at 2000px 2042px, #84969a 0%, #7a8c90 60%, rgba(122,140,144,0) 100%),
    radial-gradient(ellipse 160px 60px at 1640px 2042px, #3c5a68 0%, rgba(60,90,104,0) 100%),
    radial-gradient(ellipse 70px 50px at 60px 2000px, #1b2a2c 0%, rgba(27,42,44,0) 100%),
    radial-gradient(ellipse 90px 70px at 3300px 2000px, #12303a 0%, rgba(18,48,58,0) 100%);
}

.sprite { position: absolute; width: 0; height: 0; }

.desktop { display: flex; height: 1929px; }

.window {
  width: 1679px;
  height: 1929px;
  padding: 12px 19px 19px 20px;
  border-radius: 22px;
}
.window-dark {
  background: linear-gradient(180deg, #4a4a4a 0, #3a3a3a 12px, #333 100%);
  box-shadow: inset 0 -2px 0 #5a5a5a, inset -1px 0 0 #555;
}
.window-blue {
  margin-left: 1px;
  background: #0d0f13;
  box-shadow: inset 0 -2px 0 #3c3f42;
}

.browser {
  height: 100%;
  display: flex;
  flex-direction: column;
  border-radius: 13px;
  overflow: hidden;
}

.toolbar {
  flex: none;
  height: 80px;
  display: flex;
  align-items: center;
  padding: 2px 11px 0 34px;
  border-bottom: 2px solid;
  color: #ececec;
}
.toolbar-dark {
  border-bottom-color: #444;
  background: repeating-linear-gradient(45deg, #2a2a2a 0, #2a2a2a 32px, #303030 32px, #303030 64px);
}
.toolbar-blue {
  color: #f0f0ff;
  border-bottom-color: #5760dd;
  background: repeating-linear-gradient(45deg, #3d45d4 0, #3d45d4 32px, #444cd7 32px, #444cd7 64px);
}

.site-info {
  width: 20px;
  margin-top: 1px;
  text-align: center;
  font: bold 24px "DejaVu Sans Mono", monospace;
}
.url {
  margin-left: 28px;
  margin-top: 1px;
  margin-right: auto;
  font: 21.500px "DejaVu Sans Mono", monospace;
}

.tool {
  flex: none;
  width: 56px;
  height: 40px;
  display: flex;
  align-items: center;
  justify-content: center;
}
.ti { width: 30px; height: 30px; }
.ti-w { width: 38px; height: 30px; }

.tool-sep {
  flex: none;
  width: 2px;
  height: 40px;
  margin: 0 15.500px;
  background: currentColor;
  opacity: .2;
}
.tool-sep-wide { margin: 0 27px; }

.badge-3 {
  font: bold 10px "Liberation Sans", sans-serif;
  fill: #fff;
  text-anchor: middle;
}

.page {
  flex: 1;
  background: #f4f4fa;
}
.page-a {
  padding: 173px 0 0 239px;
  box-shadow: inset -22px -18px 30px -14px rgba(90,90,110,.32);
}
.page-b {
  padding: 175px 0 0 205px;
  background: #f4f4f9;
  box-shadow: inset 0 -18px 30px -14px rgba(90,90,110,.2);
}

.card {
  display: flex;
  flex-direction: column;
  align-items: center;
  background: #fff;
  border: 2px solid #e0e0e2;
  border-radius: 18px;
  box-shadow: 0 4px 42px rgba(0,0,0,.09);
}
.card-a { width: 1159px; height: 1473px; padding: 0 23px; }
.card-b { width: 1171px; height: 1490px; padding: 0 24px 0 23px; }

.title {
  margin: 0;
  color: #333;
  font-weight: 700;
  line-height: 1.15;
  text-align: center;
}
.card-a .title { font-size: 84px; margin-top: 108px; margin-bottom: 53px; }
.card-b .title { font-size: 85px; margin-top: 108px; margin-bottom: 56px; }

.chat {
  width: 100%;
  display: flex;
  flex-direction: column;
  flex: none;
  overflow: hidden;
  background: #f9f9f9;
  border: 2px solid #ddd;
  border-radius: 20px;
}
.card-a .chat { height: 846px; padding: 27px 0 0 7px; gap: 27px; }
.card-b .chat { height: 853px; padding: 26px 0 0 12px; gap: 27px; }

.msg {
  flex: none;
  margin: 0;
  color: #000;
  border-radius: 10px;
  line-height: 1.15;
}
.card-a .msg { width: 1104px; font-size: 42px; padding: 26.500px 27px 26px 26px; }
.card-b .msg { width: 1118px; font-size: 42.500px; padding: 27px 29px 26px 27px; }

.msg-sys { background: #ffeeba; font-style: italic; text-align: center; }
.msg-other { background: #e2e3e5; }
.msg-me { background: #d4edda; text-align: right; }

.field {
  flex: none;
  display: block;
  background: #fff;
  border: 2px solid #ddd;
  border-radius: 10px;
  font-family: "Liberation Sans", Arial, sans-serif;
  outline: none;
}
.field::placeholder { color: #757575; opacity: 1; }
.card-a .field { width: 1051px; height: 105px; margin-top: 54px; font-size: 42px; padding: 0 27px; }
.card-b .field { width: 1062px; height: 106px; margin-top: 55px; font-size: 42.500px; padding: 0 27px; }

.send {
  flex: none;
  display: block;
  color: #fff;
  background: #6c757d;
  border: 0;
  border-radius: 10px;
  font-family: "Liberation Sans", Arial, sans-serif;
}
.card-a .send { width: 394px; height: 100px; margin-top: 54px; font-size: 42px; }
.card-b .send { width: 398px; height: 102px; margin-top: 54px; font-size: 42.500px; }

/* Dock */
.dock {
  display: flex;
  align-items: flex-start;
  gap: 19px;
  width: 3083px;
  height: 100px;
  margin: 3px 0 0 139px;
  padding: 13px 0 0 13px;
  border: 2px solid #55595c;
  border-radius: 36px;
  background: linear-gradient(90deg, #1f2224 0, #1f2326 1150px, #25343c 1350px, #3b5563 1510px, #4f6063 1650px, #55666a 2050px, #2c3739 2260px, #1c2428 2450px, #1d2b31 3083px);
}

.dock-item { position: relative; flex: none; width: 63px; height: 63px; }
.dock-item-big { width: 78px; height: 78px; margin: -7px -8px 0; z-index: 1; }
.app { display: block; width: 100%; height: 100%; overflow: visible; }
.app-big { display: block; width: 78px; height: 78px; }

.running::after {
  content: "";
  position: absolute;
  left: 27px;
  top: 73px;
  width: 8px;
  height: 8px;
  border-radius: 50%;
  background: #8d9092;
}

.dock-sep {
  flex: none;
  width: 2px;
  height: 72px;
  margin: -1px 12px 0 9px;
  background: #5b6468;
}

.dock-stack { flex: none; width: 53px; height: 67px; margin-top: 1px; }
.dock-stack-f { width: 66px; margin-left: 6px; margin-top: -6px; height: 70px; }
.dock-stack-t { width: 56px; margin-left: 2px; margin-top: -5px; height: 71px; }

.cal-m { font: 15px "Liberation Sans", sans-serif; fill: #fff; text-anchor: middle; }
.cal-d { font: 36px "Liberation Sans", sans-serif; fill: #222; text-anchor: middle; }
.t-teams { font: bold 15px "Liberation Sans", sans-serif; fill: #fff; text-anchor: middle; }
.t-notion { font: bold 32px "Liberation Serif", serif; fill: #000; text-anchor: middle; }
.t-doc { font: 17px "Liberation Sans", sans-serif; fill: #fff; text-anchor: middle; }
.t-badge { font: 16px "Liberation Sans", sans-serif; fill: #fff; text-anchor: middle; }
.t-s { font: bold 46px "Liberation Sans", sans-serif; fill: #fff; text-anchor: middle; }
.t-pdf { font: 13px "Liberation Sans", sans-serif; fill: #666; text-anchor: middle; }
```
